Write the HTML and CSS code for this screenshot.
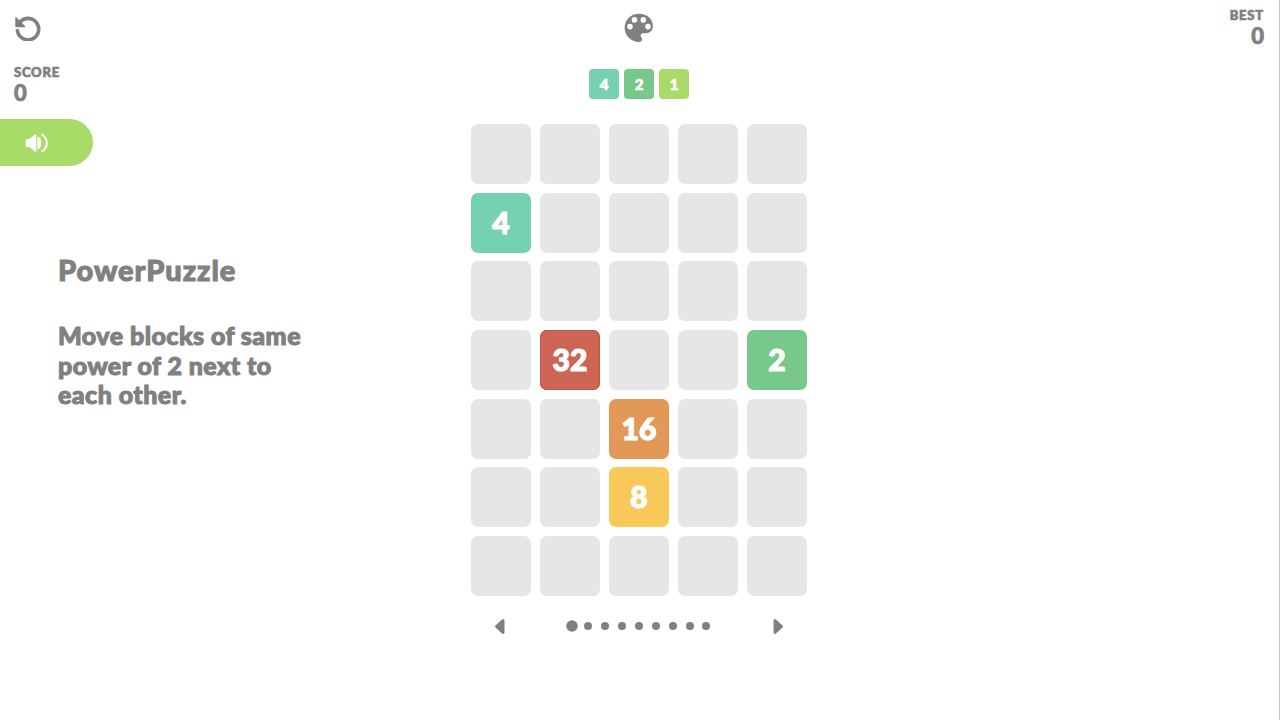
FILE: index.html
```html
<!DOCTYPE html>
<html lang="en">
<head>
  <meta charset="UTF-8">
  <title>PowerPuzzle</title>
  <link rel="stylesheet" href="styles.css">
</head>
<body>
  <div class="page">
    <aside class="side-left">
      <button class="icon-btn reset" aria-label="Restart">
        <svg width="26" height="26" viewBox="0 0 26 26">
          <path d="M5.500 6.500A10.700 10.700 0 1 1 2.400 15.500" fill="none" stroke="#808080" stroke-width="3.600" stroke-linecap="round"/>
          <path d="M1 3 L1 11.500 L9.500 11.500 Z" fill="#808080" stroke="#808080" stroke-width="1.500" stroke-linejoin="round"/>
        </svg>
      </button>
      <div class="score">
        <div class="score-label">SCORE</div>
        <div class="score-value">0</div>
      </div>
      <button class="sound" aria-label="Sound">
        <svg width="24" height="20" viewBox="0 0 24 20">
          <path d="M1.500 6.500H5L10.500 2V18L5 13.500H1.500Z" fill="#fff" stroke="#fff" stroke-width="1.500" stroke-linejoin="round"/>
          <path d="M13 4.500C16.500 6 16.500 14 13 15.500Z" fill="#fff" stroke="#fff" stroke-width="1.500" stroke-linejoin="round"/>
          <path d="M17 1.500A10 10 0 0 1 17 18.500" fill="none" stroke="#fff" stroke-width="2" stroke-linecap="round"/>
        </svg>
      </button>
      <div class="intro">
        <h1>PowerPuzzle</h1>
        <p>Move blocks of same power of 2 next to each other.</p>
      </div>
    </aside>

    <main class="center">
      <button class="icon-btn palette" aria-label="Theme">
        <svg width="30" height="30" viewBox="0 0 30 30">
          <path fill="#808080" fill-rule="evenodd" d="M15 .8C7 .8.6 7 .6 14.800s6.400 14.200 14.400 14.200c2 0 3-1.300 3-2.800 0-.8-.3-1.400-.7-1.900-.4-.5-.7-1-.7-1.700 0-1.400 1.100-2.400 2.500-2.400h3c3.700 0 6.800-3 6.800-6.700C29.400 6.200 23 .8 15 .8ZM6 16.400a2.800 2.800 0 1 1 0-5.600 2.800 2.800 0 0 1 0 5.600Zm4.500-6.700a2.800 2.800 0 1 1 0-5.600 2.800 2.800 0 0 1 0 5.600Zm8.800 0a2.800 2.800 0 1 1 0-5.600 2.800 2.800 0 0 1 0 5.600Zm4.700 6.700a2.800 2.800 0 1 1 0-5.600 2.800 2.800 0 0 1 0 5.600Z"/>
        </svg>
      </button>

      <div class="next">
        <div class="chip c4">4</div>
        <div class="chip c2">2</div>
        <div class="chip c1">1</div>
      </div>

      <div class="board">
        <div class="cell"></div><div class="cell"></div><div class="cell"></div><div class="cell"></div><div class="cell"></div>
        <div class="cell c4">4</div><div class="cell"></div><div class="cell"></div><div class="cell"></div><div class="cell"></div>
        <div class="cell"></div><div class="cell"></div><div class="cell"></div><div class="cell"></div><div class="cell"></div>
        <div class="cell"></div><div class="cell c32">32</div><div class="cell"></div><div class="cell"></div><div class="cell c2">2</div>
        <div class="cell"></div><div class="cell"></div><div class="cell c16">16</div><div class="cell"></div><div class="cell"></div>
        <div class="cell"></div><div class="cell"></div><div class="cell c8">8</div><div class="cell"></div><div class="cell"></div>
        <div class="cell"></div><div class="cell"></div><div class="cell"></div><div class="cell"></div><div class="cell"></div>
      </div>

      <div class="pager">
        <svg width="11" height="17" viewBox="0 0 11 17"><path d="M9 2.500V14.500L2.500 8.500Z" fill="#808080" stroke="#808080" stroke-width="3" stroke-linejoin="round"/></svg>
        <div class="dots">
          <span class="dot active"></span><span class="dot"></span><span class="dot"></span><span class="dot"></span><span class="dot"></span><span class="dot"></span><span class="dot"></span><span class="dot"></span><span class="dot"></span>
        </div>
        <svg width="11" height="17" viewBox="0 0 11 17"><path d="M2 2.500V14.500L8.500 8.500Z" fill="#808080" stroke="#808080" stroke-width="3" stroke-linejoin="round"/></svg>
      </div>
    </main>

    <aside class="side-right">
      <div class="score-label">BEST</div>
      <div class="score-value">0</div>
    </aside>
  </div>
</body>
</html>
```

FILE: styles.css
```css
html, body {
  margin: 0;
  height: 100%;
  overflow: hidden;
  background: #fff;
}
body {
  font-family: Lato, "Open Sans", sans-serif;
  font-weight: 900;
  color: #808080;
  -webkit-text-stroke: 0.7px currentColor;
}
button {
  padding: 0;
  border: none;
  background: none;
  display: block;
}
.page {
  height: 720px;
  box-sizing: border-box;
  border-right: 1px solid #c4c4c4;
  display: grid;
  grid-template-columns: 471px 336px 1fr;
}

/* left column */
.side-left {
  padding-top: 15px;
}
.reset {
  margin-left: 15px;
  height: 26px;
}
.score {
  margin: 24px 0 0 14px;
}
.score-label {
  font-size: 13px;
  line-height: 15px;
  letter-spacing: 0.8px;
}
.score-value {
  font-size: 22px;
  line-height: 24px;
  margin-top: 1px;
}
.sound {
  margin-top: 14px;
  width: 93px;
  height: 47px;
  background: #a8db68;
  border-radius: 0 24px 24px 0;
  padding-left: 25px;
  display: flex;
  align-items: center;
}
.intro {
  margin: 87px 0 0 58px;
  width: 260px;
  -webkit-text-stroke-width: 1px;
}
.intro h1 {
  margin: 0;
  font-size: 29px;
  line-height: 34px;
  font-weight: 900;
  letter-spacing: 0.95px;
}
.intro p {
  margin: 34px 0 0;
  font-size: 25px;
  line-height: 29.500px;
  letter-spacing: 0.45px;
}

/* center column */
.center {
  padding-top: 13px;
}
.palette {
  margin: 0 auto;
  width: 30px;
  height: 30px;
}
.next {
  margin-top: 26px;
  display: flex;
  justify-content: center;
  gap: 5px;
}
.chip {
  width: 30px;
  height: 30px;
  border-radius: 4px;
  color: #fff;
  font-size: 15px;
  display: flex;
  align-items: center;
  justify-content: center;
  padding-bottom: 1px;
  box-sizing: border-box;
}
.board {
  margin-top: 25px;
  display: grid;
  grid-template-columns: repeat(5, 60px);
  column-gap: 9px;
  row-gap: 8.670px;
}
.cell {
  height: 60px;
  background: #e6e6e6;
  border-radius: 7px;
  color: #fff;
  font-size: 30px;
  display: flex;
  align-items: center;
  justify-content: center;
  padding-bottom: 2px;
  box-sizing: border-box;
  -webkit-text-stroke-width: 1.2px;
}
.c1 { background: #a8db68; }
.c2 { background: #77c88a; }
.c4 { background: #76d1b0; }
.c8 { background: #f8c85b; }
.c16 { background: #e29957; }
.c32 { background: #cd6555; box-shadow: inset 0 0 0 1px #c25445; }

.pager {
  margin-top: 22px;
  padding: 0 23px;
  display: flex;
  align-items: center;
  justify-content: space-between;
}
.dots {
  display: flex;
  align-items: center;
  gap: 8.860px;
}
.dot {
  width: 8px;
  height: 8px;
  border-radius: 50%;
  background: #808080;
}
.dot.active {
  transform: scale(1.45);
}

/* right column */
.side-right {
  padding: 8px 15px 0 0;
  text-align: right;
}
```
